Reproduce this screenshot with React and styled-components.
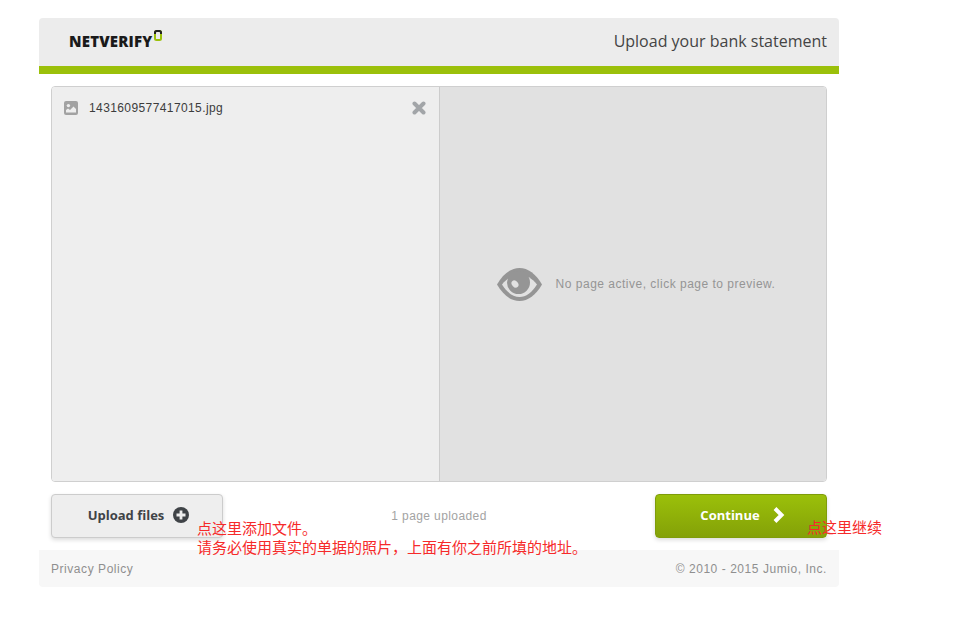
import React from "react";
import styled, { createGlobalStyle } from "styled-components";

const GlobalStyle = createGlobalStyle`
  html, body {
    margin: 0;
    padding: 0;
    background: #fff;
  }
  body {
    font-family: "Liberation Sans", Arial, sans-serif;
  }
`;

const Page = styled.div`
  position: relative;
  width: 800px;
  height: 635px;
  margin-left: 39px;
  padding-top: 18px;
  box-sizing: border-box;
`;

const Header = styled.header`
  display: flex;
  align-items: center;
  justify-content: space-between;
  height: 48px;
  padding: 0 12px 0 30px;
  background: #ececec;
  border-bottom: 8px solid #9bc00a;
  border-radius: 4px 4px 0 0;
`;

const Logo = styled.div`
  display: flex;
  align-items: flex-start;
  gap: 2px;
  height: 24px;
  margin-bottom: 3px;
`;

const LogoText = styled.span`
  font-family: "Open Sans", sans-serif;
  font-weight: 800;
  font-size: 15px;
  line-height: 24px;
  letter-spacing: 0.2px;
  color: #1a1a1a;
`;

const Title = styled.h1`
  margin: 0 0 2px;
  font-family: "Open Sans", sans-serif;
  font-weight: 400;
  font-size: 16px;
  color: #444;
`;

const Main = styled.main`
  display: flex;
  height: 396px;
  margin: 12px 12px 0;
  box-sizing: border-box;
  border: 1px solid #cfcfcf;
  border-radius: 4px;
  overflow: hidden;
`;

const FileList = styled.section`
  width: 388px;
  flex: none;
  box-sizing: border-box;
  background: #eeeeee;
  border-right: 1px solid #cccccc;
  padding: 13px 13px 0 12px;
`;

const FileRow = styled.div`
  display: flex;
  align-items: center;
  height: 16px;
  font-size: 12px;
  color: #3c3c3c;
  letter-spacing: 0.4px;
`;

const FileName = styled.span`
  margin-left: 11px;
  flex: 1;
`;

const Preview = styled.section`
  flex: 1;
  display: flex;
  align-items: center;
  justify-content: center;
  gap: 14px;
  padding-left: 6px;
  background: #e1e1e1;
  color: #959595;
  font-size: 12px;
  letter-spacing: 0.5px;
`;

const Actions = styled.div`
  display: grid;
  grid-template-columns: 172px 1fr 172px;
  align-items: center;
  margin: 12px 12px 0;
`;

const Button = styled.button`
  display: flex;
  align-items: center;
  justify-content: center;
  gap: ${(props) => (props.$primary ? "12px" : "9px")};
  height: 44px;
  padding: 0 0 2px ${(props) => (props.$primary ? "3px" : "3px")};
  font-family: "Open Sans", sans-serif;
  font-weight: 700;
  font-size: 13px;
  border-radius: 4px;
  box-shadow: 0 2px 4px rgba(0, 0, 0, 0.14);
  color: ${(props) => (props.$primary ? "#fff" : "#3f4347")};
  border: 1px solid ${(props) => (props.$primary ? "#7f9c0a" : "#cccccc")};
  background: ${(props) =>
    props.$primary
      ? "linear-gradient(#9bc00a, #84a108)"
      : "#eeeeee"};
`;

const Status = styled.div`
  text-align: center;
  font-size: 12px;
  letter-spacing: 0.4px;
  color: #a3a3a3;
`;

const Footer = styled.footer`
  display: flex;
  align-items: center;
  justify-content: space-between;
  height: 37px;
  margin-top: 12px;
  padding: 0 12px;
  background: #f7f7f7;
  border-radius: 0 0 4px 4px;
  font-size: 12px;
  letter-spacing: 0.55px;
  color: #8f8f8f;
`;

const Note = styled.div`
  position: absolute;
  left: ${(props) => props.$left}px;
  top: ${(props) => props.$top}px;
  font-family: "Noto Sans CJK SC", sans-serif;
  font-size: 15px;
  line-height: 19px;
  color: #f62a2a;
  white-space: nowrap;
`;

function LogoMark() {
  return (
    <svg width="8" height="11" viewBox="0 0 8 11" style={{ marginTop: 1 }}>
      <rect x="1" y="1" width="6" height="9" rx="1.500" fill="none" stroke="#9bc00a" strokeWidth="2" />
      <path d="M1 4V2.500Q1 1 2.500 1H5.500Q7 1 7 2.500V4" fill="none" stroke="#222" strokeWidth="2" />
    </svg>
  );
}

function ImageIcon() {
  return (
    <svg width="14" height="14" viewBox="0 0 14 14">
      <rect width="14" height="14" rx="2" fill="#a2a2a2" />
      <circle cx="4.400" cy="4.600" r="1.700" fill="#eee" />
      <path d="M2 11.500V9l2-1.500L6 9l3.500-3.500L12 8v3.500z" fill="#eee" />
    </svg>
  );
}

function CloseIcon() {
  return (
    <svg width="14" height="14" viewBox="0 0 14 14">
      <path d="M2.500 2.500l9 9M11.500 2.500l-9 9" stroke="#a2a5a8" strokeWidth="4" strokeLinecap="round" />
    </svg>
  );
}

function EyeIcon() {
  return (
    <svg width="45" height="33" viewBox="0 0 45 33">
      <path fill="#959595" d="M0 16.500C6 6 14 0 22.500 0S39 6 45 16.500C39 27 31 33 22.500 33S6 27 0 16.500z" />
      <path fill="#e1e1e1" d="M5 16.500C10 10 16 7 22.500 7S35 10 40 16.500C35 24.500 29 29 22.500 29S10 24.500 5 16.500z" />
      <circle cx="21.500" cy="14.500" r="11.500" fill="#959595" />
      <ellipse cx="18" cy="16" rx="3" ry="4" transform="rotate(-40 18 16)" fill="#e1e1e1" />
    </svg>
  );
}

function PlusIcon() {
  return (
    <svg width="16" height="16" viewBox="0 0 16 16">
      <circle cx="8" cy="8" r="8" fill="#3f4347" />
      <path d="M8 3.500v9M3.500 8h9" stroke="#eee" strokeWidth="2.800" />
    </svg>
  );
}

function ChevronIcon() {
  return (
    <svg width="13" height="16" viewBox="0 0 13 16">
      <path d="M3 1.500L9.500 8 3 14.500" fill="none" stroke="#fff" strokeWidth="4" />
    </svg>
  );
}

export default function App() {
  return (
    <Page>
      <GlobalStyle />
      <Header>
        <Logo>
          <LogoText>NETVERIFY</LogoText>
          <LogoMark />
        </Logo>
        <Title>Upload your bank statement</Title>
      </Header>
      <Main>
        <FileList>
          <FileRow>
            <ImageIcon />
            <FileName>1431609577417015.jpg</FileName>
            <CloseIcon />
          </FileRow>
        </FileList>
        <Preview>
          <EyeIcon />
          <span>No page active, click page to preview.</span>
        </Preview>
      </Main>
      <Actions>
        <Button>
          Upload files
          <PlusIcon />
        </Button>
        <Status>1 page uploaded</Status>
        <Button $primary>
          Continue
          <ChevronIcon />
        </Button>
      </Actions>
      <Footer>
        <span>Privacy Policy</span>
        <span>© 2010 - 2015 Jumio, Inc.</span>
      </Footer>
      <Note $left={158} $top={518}>
        点这里添加文件。
        <br />
        请务必使用真实的单据的照片，上面有你之前所填的地址。
      </Note>
      <Note $left={768} $top={517}>
        点这里继续
      </Note>
    </Page>
  );
}
